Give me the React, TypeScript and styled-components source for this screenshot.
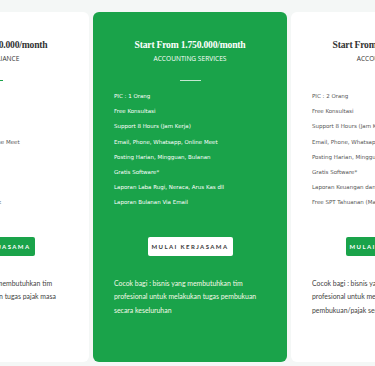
import React from 'react';
import styled, { createGlobalStyle } from 'styled-components';

const GlobalStyle = createGlobalStyle`
  html, body {
    margin: 0;
    padding: 0;
    background: #f4f7f6;
  }
  body {
    width: 375px;
    height: 366px;
    overflow: hidden;
  }
`;

const GREEN = '#1aa34a';

type Plan = {
  price: string;
  name: string;
  features: string[];
  note: string;
  featured?: boolean;
};

const plans: Plan[] = [
  {
    price: 'Start From 1.500.000/month',
    name: 'Tax Compliance',
    features: [
      'PIC : 1 Orang',
      'Free Konsultasi',
      'Support 8 Hours',
      'Email, Phone, Whatsapp, Online Meet',
      'Lapor SPT Masa',
      'Hitung PPh 21',
      'Billing Pajak',
      'Konsultasi & Perhitungan Pajak',
    ],
    note: 'Cocok bagi : pebisnis yang membutuhkan tim profesional untuk melakukan tugas pajak masa bulanan',
  },
  {
    price: 'Start From 1.750.000/month',
    name: 'Accounting Services',
    featured: true,
    features: [
      'PIC : 1 Orang',
      'Free Konsultasi',
      'Support 8 Hours (Jam Kerja)',
      'Email, Phone, Whatsapp, Online Meet',
      'Posting Harian, Mingguan, Bulanan',
      'Gratis Software*',
      'Laporan Laba Rugi, Neraca, Arus Kas dll',
      'Laporan Bulanan Via Email',
    ],
    note: 'Cocok bagi : bisnis yang membutuhkan tim profesional untuk melakukan tugas pembukuan secara keseluruhan',
  },
  {
    price: 'Start From 2.500.000/month',
    name: 'Accounting & Tax',
    features: [
      'PIC : 2 Orang',
      'Free Konsultasi',
      'Support 8 Hours (Jam Kerja)',
      'Email, Phone, Whatsapp, Online Meet',
      'Posting Harian, Mingguan, Bulanan',
      'Gratis Software*',
      'Laporan Keuangan dan Pajak Bulanan',
      'Free SPT Tahuanan (Max 1 Badan)',
    ],
    note: 'Cocok bagi : bisnis yang membutuhkan tim profesional untuk melakukan tugas pembukuan/pajak secara keseluruhan',
  },
];

const Viewport = styled.div`
  width: 375px;
  height: 366px;
  overflow: hidden;
`;

const Track = styled.div`
  display: flex;
  gap: 4px;
  padding-top: 12px;
  margin-left: -105px;
`;

const Card = styled.div<{ $featured?: boolean }>`
  flex: 0 0 194px;
  height: 350px;
  box-sizing: border-box;
  border-radius: 6px;
  padding: 26px 21px 0;
  display: flex;
  flex-direction: column;
  background: ${(p) => (p.$featured ? GREEN : '#ffffff')};
  color: ${(p) => (p.$featured ? '#ffffff' : '#333333')};
`;

const Price = styled.h3`
  margin: 0;
  text-align: center;
  font-family: 'Liberation Serif', 'DejaVu Serif', serif;
  font-weight: 700;
  font-size: 9.6px;
  letter-spacing: -0.2px;
  line-height: 13px;
  white-space: nowrap;
`;

const Name = styled.div`
  margin-top: 2px;
  text-align: center;
  font-family: 'Open Sans', 'Liberation Sans', sans-serif;
  font-size: 6.6px;
  line-height: 11px;
  text-transform: uppercase;
  white-space: nowrap;
`;

const Rule = styled.div<{ $featured?: boolean }>`
  width: 21px;
  height: 1px;
  margin: 16px auto 0;
  background: ${(p) => (p.$featured ? 'rgba(255,255,255,0.75)' : GREEN)};
`;

const Features = styled.ul`
  list-style: none;
  margin: 8px 0 0;
  padding: 0;
  display: flex;
  flex-direction: column;
`;

const Feature = styled.li<{ $featured?: boolean }>`
  font-family: 'DejaVu Sans', 'Liberation Sans', sans-serif;
  font-size: 5.5px;
  line-height: 15.2px;
  white-space: nowrap;
  color: ${(p) => (p.$featured ? '#ffffff' : '#555555')};
`;

const Action = styled.div`
  display: flex;
  justify-content: center;
  margin-top: 26px;
`;

const Button = styled.button<{ $featured?: boolean }>`
  width: 85px;
  height: 19px;
  border: none;
  border-radius: 2px;
  padding: 0;
  cursor: pointer;
  font-family: 'Lato', 'Liberation Sans', sans-serif;
  font-weight: 700;
  font-size: 6px;
  letter-spacing: 1.4px;
  text-transform: uppercase;
  background: ${(p) => (p.$featured ? '#ffffff' : GREEN)};
  color: ${(p) => (p.$featured ? '#3a3a3a' : '#ffffff')};
`;

const Note = styled.p<{ $featured?: boolean }>`
  margin: 21px 0 0;
  font-family: 'Lato', 'Liberation Sans', sans-serif;
  font-size: 6.9px;
  line-height: 13.5px;
  color: ${(p) => (p.$featured ? '#f4f8e6' : '#444444')};
`;

function PlanCard({ plan }: { plan: Plan }) {
  const f = plan.featured;
  return (
    <Card $featured={f}>
      <Price>{plan.price}</Price>
      <Name>{plan.name}</Name>
      <Rule $featured={f} />
      <Features>
        {plan.features.map((item) => (
          <Feature key={item} $featured={f}>
            {item}
          </Feature>
        ))}
      </Features>
      <Action>
        <Button $featured={f}>Mulai Kerjasama</Button>
      </Action>
      <Note $featured={f}>{plan.note}</Note>
    </Card>
  );
}

export default function App() {
  return (
    <Viewport>
      <GlobalStyle />
      <Track>
        {plans.map((plan) => (
          <PlanCard key={plan.name} plan={plan} />
        ))}
      </Track>
    </Viewport>
  );
}
